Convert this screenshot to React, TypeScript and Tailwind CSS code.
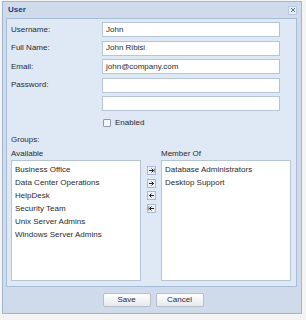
import React from "react";

const Field = ({ label, value }: { label: string; value: string }) => (
  <div className="flex items-center h-[15px]">
    <div className="w-[91px] text-[8px] text-[#2a2a2a]">{label}</div>
    <div className="w-[178px] h-[15px] bg-white border border-[#b5c4d6] px-[3px] flex items-center text-[8px] text-[#2a2a2a]">
      {value}
    </div>
  </div>
);

const ArrowBtn = ({ dir, bar }: { dir: "l" | "r"; bar?: boolean }) => (
  <div className="w-[9px] h-[9px] border border-[#a9b8cc] bg-[#eef2f8] flex items-center justify-center">
    <svg width="7" height="7" viewBox="0 0 7 7">
      {dir === "r" ? (
        <>
          <path d="M1 3.5H5.5M3.5 1.5L5.5 3.5L3.5 5.5" stroke="#222" strokeWidth="1" fill="none" />
          {bar && <path d="M6.2 1.5V5.5" stroke="#555" strokeWidth="0.8" />}
        </>
      ) : (
        <>
          <path d="M6 3.5H1.5M3.5 1.5L1.5 3.5L3.5 5.5" stroke="#222" strokeWidth="1" fill="none" />
          {bar && <path d="M0.8 1.5V5.5" stroke="#555" strokeWidth="0.8" />}
        </>
      )}
    </svg>
  </div>
);

const ListBox = ({ items }: { items: string[] }) => (
  <div className="w-[130px] h-[121px] bg-white border border-[#b5c4d6] pt-[2px] pl-[3px] text-[8px] text-[#2a2a2a]">
    {items.map((it) => (
      <div key={it} className="h-[13px] leading-[13px]">
        {it}
      </div>
    ))}
  </div>
);

export default function App() {
  return (
    <div
      className="w-[306px] h-[320px] bg-[#f4f4f4] pt-[1px] pl-[2px]"
      style={{ fontFamily: '"Liberation Sans", Arial, sans-serif' }}
    >
      <div className="w-[300px] h-[313px] bg-[#cfdbea] border border-[#a3b6cf] flex flex-col">
        {/* title bar */}
        <div className="h-[16px] flex items-center justify-between pl-[5px] pr-[4px]">
          <span className="text-[8px] font-bold text-[#15428b]">User</span>
          <div className="w-[9px] h-[9px] border border-[#b9c8dc] bg-[#e4ecf6] flex items-center justify-center">
            <svg width="6" height="6" viewBox="0 0 6 6">
              <path d="M1 1L5 5M5 1L1 5" stroke="#5a6f8e" strokeWidth="1" />
            </svg>
          </div>
        </div>
        {/* body */}
        <div className="ml-[3px] w-[291px] h-[269px] bg-[#dfe8f5] border border-[#a7bcd6] pl-[4px] pt-[3px]">
          <div className="flex flex-col gap-[3.5px]">
            <Field label="Username:" value="John" />
            <Field label="Full Name:" value="John Ribisi" />
            <Field label="Email:" value="john@company.com" />
            <Field label="Password:" value="" />
            <Field label="" value="" />
          </div>
          <div className="flex items-center ml-[92px] mt-[7px] h-[10px]">
            <div className="w-[8px] h-[8px] border border-[#8e9aab] bg-[#f6f8fb] rounded-[1px]" />
            <span className="ml-[4px] text-[8px] text-[#2a2a2a]">Enabled</span>
          </div>
          <div className="mt-[7px] text-[8px] text-[#2a2a2a] h-[10px] leading-[10px]">Groups:</div>
          <div className="mt-[4px] flex text-[8px] text-[#2a2a2a] h-[10px] leading-[10px]">
            <span className="w-[150px]">Available</span>
            <span>Member Of</span>
          </div>
          <div className="mt-[1px] flex">
            <ListBox
              items={[
                "Business Office",
                "Data Center Operations",
                "HelpDesk",
                "Security Team",
                "Unix Server Admins",
                "Windows Server Admins",
              ]}
            />
            <div className="w-[20px] flex flex-col items-center pt-[6px] gap-[3.5px]">
              <ArrowBtn dir="r" bar />
              <ArrowBtn dir="r" />
              <ArrowBtn dir="l" />
              <ArrowBtn dir="l" bar />
            </div>
            <ListBox items={["Database Administrators", "Desktop Support"]} />
          </div>
        </div>
        {/* footer */}
        <div className="flex justify-center gap-[5px] pt-[6px] pl-[2px]">
          <button className="w-[48px] h-[14px] border border-[#b8bec8] bg-gradient-to-b from-white to-[#e6e9ee] rounded-[2px] text-[8px] text-[#2a2a2a] flex items-center justify-center">
            Save
          </button>
          <button className="w-[48px] h-[14px] border border-[#b8bec8] bg-gradient-to-b from-white to-[#e6e9ee] rounded-[2px] text-[8px] text-[#2a2a2a] flex items-center justify-center">
            Cancel
          </button>
        </div>
      </div>
    </div>
  );
}
